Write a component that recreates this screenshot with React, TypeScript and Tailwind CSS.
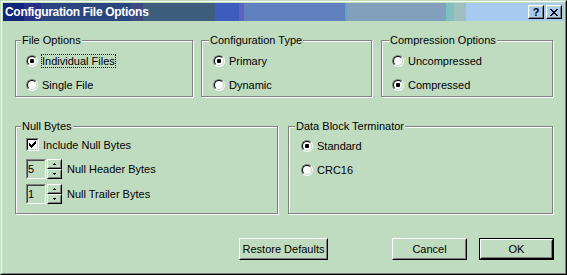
import React from 'react';

// Win9x style bevels on the "money green" face colour
function Raised({ className = '', children }: { className?: string; children?: React.ReactNode }) {
    return (
        <div className={`border border-t-white border-l-white border-r-black border-b-black ${className}`}>
            <div className="w-full h-full border border-t-[#c0dcc0] border-l-[#c0dcc0] border-r-[#808080] border-b-[#808080] flex items-center justify-center">
                {children}
            </div>
        </div>
    );
}

function PushButton({ label, isDefault, className = '' }: { label: string; isDefault?: boolean; className?: string }) {
    if (isDefault) {
        return (
            <div className={`h-[22px] border border-black ${className}`}>
                <Raised className="w-full h-full">{label}</Raised>
            </div>
        );
    }
    return <Raised className={`h-[22px] ${className}`}>{label}</Raised>;
}

function GroupBox({ title, labelLeft, className = '', children }: { title: string; labelLeft: string; className?: string; children?: React.ReactNode }) {
    return (
        <div className={`relative h-full border border-[#808080] shadow-[inset_1px_1px_0_#fff,1px_1px_0_#fff] ${className}`}>
            <span className={`absolute -top-[7px] ${labelLeft} px-px bg-[#c0dcc0] leading-[13px] whitespace-nowrap`}>{title}</span>
            {children}
        </div>
    );
}

function Radio({ checked }: { checked?: boolean }) {
    return (
        <span className="w-3 h-3 shrink-0 flex rounded-full border border-t-[#808080] border-l-[#808080] border-r-white border-b-white">
            <span className="flex-1 flex items-center justify-center rounded-full border border-t-black border-l-black border-r-[#c0dcc0] border-b-[#c0dcc0] bg-white">
                {checked && <span className="w-1 h-1 bg-black rounded-[1px]" />}
            </span>
        </span>
    );
}

function Option({ label, checked, focused }: { label: string; checked?: boolean; focused?: boolean }) {
    return (
        <div className="flex items-center h-3 gap-[3px]">
            <Radio checked={checked} />
            <span className={`border leading-[12px] whitespace-nowrap ${focused ? 'border-dotted border-black' : 'border-transparent'}`}>
                {label}
            </span>
        </div>
    );
}

function CheckBox({ checked }: { checked?: boolean }) {
    return (
        <span className="w-[13px] h-[13px] shrink-0 flex border border-t-[#808080] border-l-[#808080] border-r-white border-b-white">
            <span className="flex-1 flex items-center justify-center border border-t-black border-l-black border-r-[#c0dcc0] border-b-[#c0dcc0] bg-white">
                {checked && (
                    <svg width="7" height="7" viewBox="0 0 7 7" shapeRendering="crispEdges">
                        <path
                            fill="#000"
                            d="M6 0h1v1h-1z M5 1h2v1h-2z M0 2h1v1h-1z M4 2h3v1h-3z M0 3h2v1h-2z M3 3h3v1h-3z M0 4h5v1h-5z M1 5h3v1h-3z M2 6h1v1h-1z"
                        />
                    </svg>
                )}
            </span>
        </span>
    );
}

function SpinBox({ value, label, className = '' }: { value: string; label: string; className?: string }) {
    return (
        <div className={`flex items-center h-5 ${className}`}>
            <div className="w-5 h-5 border border-t-[#808080] border-l-[#808080] border-r-white border-b-white">
                <div className="w-full h-full flex items-center border border-t-[#404040] border-l-[#404040] border-r-[#c0dcc0] border-b-[#c0dcc0] leading-[12px]">
                    {value}
                </div>
            </div>
            <div className="ml-px flex flex-col w-[15px] h-5">
                <Raised className="h-[10px]">
                    <svg width="3" height="2" viewBox="0 0 3 2" shapeRendering="crispEdges">
                        <path fill="#000" d="M1 0h1v1h-1z M0 1h3v1h-3z" />
                    </svg>
                </Raised>
                <Raised className="h-[10px]">
                    <svg width="3" height="2" viewBox="0 0 3 2" shapeRendering="crispEdges">
                        <path fill="#000" d="M0 0h3v1h-3z M1 1h1v1h-1z" />
                    </svg>
                </Raised>
            </div>
            <span className="ml-[5px] whitespace-nowrap">{label}</span>
        </div>
    );
}

export default function App() {
    return (
        <div className="w-[567px] h-[275px] bg-[#c0dcc0] border border-t-[#c0dcc0] border-l-[#c0dcc0] border-r-black border-b-black font-['Liberation_Sans',Arial,sans-serif] text-[11px] text-black">
            <div className="h-full flex flex-col p-px border border-t-white border-l-white border-r-[#808080] border-b-[#808080]">
                {/* Title bar */}
                <div className="h-[18px] shrink-0 flex items-center px-[2px] bg-[linear-gradient(to_right,#10267a_0,#10267a_21px,#28308a_21px,#28308a_38px,#2a4680_38px,#2a4680_128px,#404880_128px,#404880_140px,#3d5f7d_140px,#3d5f7d_212px,#3d5cbd_212px,#3d5cbd_236px,#5d63c0_236px,#5d63c0_241px,#6080c0_241px,#6080c0_342px,#68a0c0_342px,#68a0c0_344px,#80a0bc_344px,#80a0bc_443px,#80c0c0_443px,#80c0c0_451px,#a0c0c0_451px,#a0c0c0_463px,#a6caf0_463px,#a6caf0_100%)]">
                    <span className="flex-1 text-white font-bold text-[12px] tracking-[-0.3px] leading-[18px] whitespace-nowrap">
                        Configuration File Options
                    </span>
                    <Raised className="w-4 h-[14px]">
                        <span className="font-bold text-[11px] leading-none">?</span>
                    </Raised>
                    <Raised className="w-4 h-[14px] ml-[2px]">
                        <svg width="8" height="7" viewBox="0 0 8 7" shapeRendering="crispEdges">
                            <path
                                fill="#000"
                                d="M0 0h2v1h-2z M6 0h2v1h-2z M1 1h2v1h-2z M5 1h2v1h-2z M2 2h4v1h-4z M3 3h2v1h-2z M2 4h4v1h-4z M1 5h2v1h-2z M5 5h2v1h-2z M0 6h2v1h-2z M6 6h2v1h-2z"
                            />
                        </svg>
                    </Raised>
                </div>

                {/* Body */}
                <div className="flex-1 pt-[19px] pl-[12px]">
                    <div className="flex h-[57px]">
                        <GroupBox title="File Options" labelLeft="left-[5px]" className="w-[178px] pl-[10px] pt-[14px]">
                            <div className="flex flex-col gap-3">
                                <Option label="Individual Files" checked focused />
                                <Option label="Single File" />
                            </div>
                        </GroupBox>
                        <GroupBox title="Configuration Type" labelLeft="left-[7px]" className="ml-[8px] w-[171px] pl-[11px] pt-[14px]">
                            <div className="flex flex-col gap-3">
                                <Option label="Primary" checked />
                                <Option label="Dynamic" />
                            </div>
                        </GroupBox>
                        <GroupBox title="Compression Options" labelLeft="left-[7px]" className="ml-[9px] w-[172px] pl-[10px] pt-[14px]">
                            <div className="flex flex-col gap-3">
                                <Option label="Uncompressed" />
                                <Option label="Compressed" checked />
                            </div>
                        </GroupBox>
                    </div>

                    <div className="flex mt-[29px] h-[88px]">
                        <GroupBox title="Null Bytes" labelLeft="left-[5px]" className="w-[263px] pl-[10px] pt-[11px]">
                            <div className="flex items-center h-[13px] gap-[3px]">
                                <CheckBox checked />
                                <span className="border border-transparent leading-[12px] whitespace-nowrap">Include Null Bytes</span>
                            </div>
                            <SpinBox value="5" label="Null Header Bytes" className="mt-[8px]" />
                            <SpinBox value="1" label="Null Trailer Bytes" className="mt-[5px]" />
                        </GroupBox>
                        <GroupBox title="Data Block Terminator" labelLeft="left-[6px]" className="ml-[10px] w-[265px] pl-[12px] pt-[13px]">
                            <div className="flex flex-col gap-3">
                                <Option label="Standard" checked />
                                <Option label="CRC16" />
                            </div>
                        </GroupBox>
                    </div>

                    <div className="flex mt-[24px]">
                        <PushButton label="Restore Defaults" className="ml-[224px] w-[89px]" />
                        <PushButton label="Cancel" className="ml-[64px] w-[75px]" />
                        <PushButton label="OK" isDefault className="ml-[12px] w-[75px]" />
                    </div>
                </div>
            </div>
        </div>
    );
}
